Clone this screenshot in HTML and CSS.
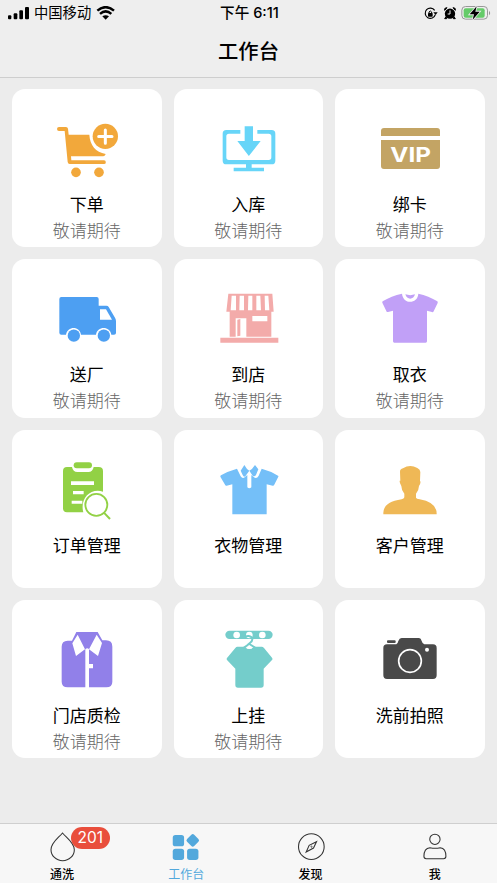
FILE: index.html
```html
<!DOCTYPE html>
<html lang="zh-CN">
<head>
<meta charset="utf-8">
<meta name="viewport" content="width=device-width, initial-scale=1">
<title>工作台</title>
<link rel="stylesheet" href="styles.css">
</head>
<body>
<div class="app">
  <header class="header">
    <div class="status">
      <div class="status-left">
        <svg class="signal" viewBox="24 15 63 42"><rect x="24" y="43" width="10" height="12" rx="3"/><rect x="41" y="37" width="11" height="18" rx="3"/><rect x="58" y="28" width="11" height="27" rx="3"/><rect x="75" y="18" width="12" height="37" rx="3"/></svg>
        <span>中国移动</span>
        <svg class="wifi" viewBox="291 15 57 42"><g fill="none" stroke="#000" stroke-width="7.5"><path d="M295 29Q320 8 345 29"/><path d="M303 38.500Q320 24 337 38.500"/></g><path d="M310 46Q320 39 330 46L320 56Z"/></svg>
      </div>
      <div class="status-time">下午 6:11</div>
      <div class="status-right">
        <svg class="indicators" viewBox="530 13 201 48">
          <path d="M562 29A15.500 15.500 0 1 0 564 42" fill="none" stroke="#000" stroke-width="3.500"/><path d="M558 35L571 35L565 43Z"/>
          <rect x="542" y="37" width="14" height="11" rx="2"/><path d="M545 38V34Q549 28 553 34V38" fill="none" stroke="#000" stroke-width="3"/>
          <circle cx="608" cy="39" r="15.500"/><path d="M592 29Q590 21 599 21ZM617 21Q626 21 624 29ZM596 48L592 54H598ZM620 48L624 54H618Z" stroke="#000" stroke-width="3"/><path d="M608 29V40H601" fill="none" stroke="#ededed" stroke-width="3"/>
          <rect x="643.500" y="17.500" width="77" height="38" rx="11" fill="none" stroke="#989898" stroke-width="3"/>
          <rect x="649" y="23" width="63" height="28" rx="6" fill="#65cb69"/><path d="M725 30Q732 37 725 44Z" fill="#989898"/>
          <path d="M688 17L667 41H680L676 57L697 33H684Z" stroke="#ededed" stroke-width="5" paint-order="stroke"/>
        </svg>
      </div>
    </div>
    <h1 class="title">工作台</h1>
  </header>

  <main class="grid">
    <section class="card">
      <svg viewBox="36 87 448.500 210" fill="#f2a83b"><path d="M177 126H198Q203 126 204 131L206 149H268C270 181 287 201 317 207Q316 213 310 214H213L214 226H312A5.500 5.500 0 0 1 312 237H209Q204 237 203 231L194 138H177A6 6 0 0 1 177 126Z"/><circle cx="228" cy="262" r="14.500"/><circle cx="297" cy="262" r="14.500"/><circle cx="316" cy="154" r="38"/><path d="M316 135V175M296 154.500H336" fill="none" stroke="#fff" stroke-width="9" stroke-linecap="round"/></svg>
      <h2>下单</h2><p>敬请期待</p>
    </section>
    <section class="card">
      <svg viewBox="26 87 448.500 210" fill="#67d5f8"><path d="M225 135H183Q172 135 172 146V227Q172 238 183 238H242V248H205V259H296V248H259V238H319Q330 238 330 227V146Q330 135 319 135H276V146H310Q318 146 318 154V217Q318 225 310 225H191Q183 225 183 217V154Q183 146 191 146H225Z"/><path d="M238 124H263V168H286L250.500 213L216 168H238Z"/></svg>
      <h2>入库</h2><p>敬请期待</p>
    </section>
    <section class="card">
      <svg viewBox="24 87 448.500 210" fill="#c3a464"><path d="M162 153V138Q162 129 171 129H330Q339 129 339 138V153ZM162 165H339V243Q339 252 330 252H171Q162 252 162 243Z"/><text class="vip" x="251" y="230" text-anchor="middle" textLength="122" lengthAdjust="spacingAndGlyphs">VIP</text></svg>
      <h2>绑卡</h2><p>敬请期待</p>
    </section>
    <section class="card">
      <svg viewBox="36 88 448.500 210" fill="#4d9ff2"><path d="M184 127H290Q296 127 296 133V153H319Q324 153 326 157L345 189Q348 194 348 200V235Q348 240 342 240H334C331 213 291 213 288 240H243C240 213 202 213 198 240H184Q178 240 178 234V133Q178 127 184 127Z"/><path d="M300 164H318L336 195H300Z" fill="#fff"/><circle cx="221.500" cy="243" r="18.500"/><circle cx="311.500" cy="243" r="18.500"/></svg>
      <h2>送厂</h2><p>敬请期待</p>
    </section>
    <section class="card">
      <svg viewBox="26 88 448.500 210" fill="#f3abaa"><path d="M189 117H321L325 171H318V246H243V191H211V246H193V171H183ZM216 195L225 193V243L216 245ZM165 249H339V264H165Z"/><path d="M199 123H212V167H196ZM223 123H236V167H222ZM249 123H261V167H248ZM273 123H285L287 167H273ZM298 123H309L312 167H299ZM261 184H306V200H261Z" fill="#fff"/></svg>
      <h2>到店</h2><p>敬请期待</p>
    </section>
    <section class="card">
      <svg viewBox="510 88 448.500 210" fill="#c1a0f7"><path d="M711 117Q679 124 653 140Q651 142 652 144L665 171Q666 173 669 172L684 168V260Q684 264 688 264H782Q786 264 786 260V168L801 172Q804 174 806 170L818 145Q819 142 817 140Q791 124 760 117C758 148 715 151 711 117Z"/><path d="M721 119Q736 124 750 119C747 135 726 138 721 119Z"/></svg>
      <h2>取衣</h2><p>敬请期待</p>
    </section>
    <section class="card">
      <svg viewBox="36 89 448.500 210" fill="#92d145"><path d="M201 125H216Q219 140 232 140H265Q278 140 281 125H296Q309 125 309 137V199C271 187 239 220 250 261H201Q189 261 189 249V137Q189 125 201 125Z"/><rect x="221" y="111" width="55" height="18" rx="9"/><path d="M213 168H282V179H213ZM219 197H251V207H219ZM215 226H247V235H215Z" fill="#fff"/><circle cx="289" cy="238.500" r="33" fill="#fff" stroke="#92d145" stroke-width="5.500"/><path d="M311 261L330 281" stroke="#92d145" stroke-width="6"/></svg>
      <h2>订单管理</h2>
    </section>
    <section class="card">
      <svg viewBox="521 89 448.500 210" fill="#74bff8"><path d="M710 130L721 153Q727 162 734 155L741 149V186Q747 192 753 186V149L760 155Q769 162 775 151L784 130Q811 137 833 151Q835 152 834 154L821 180Q819 182 817 181L799 177V267H696V177L679 181Q676 182 675 180L660 154Q660 151 662 150Q684 137 710 130ZM732 119Q739 132 747 136L735 153Q730 156 727 149L721 136ZM764 119L774 132L767 149Q762 156 757 151L747 136Q756 132 764 119Z"/></svg>
      <h2>衣物管理</h2>
    </section>
    <section class="card">
      <svg viewBox="24 89 448.500 210" fill="#efb856"><path d="M220 166L219 139Q219 131 228 129Q249 115 271 128Q280 132 280 140L279 166Q283 172 276 182Q276 193 267 205V217Q268 221 278 222Q329 231 329 265V267H169V262Q170 230 224 222Q231 221 232 216V205Q223 194 223 182Q217 173 218 166Z"/></svg>
      <h2>客户管理</h2>
    </section>
    <section class="card">
      <svg viewBox="36 90 448.500 210" fill="#9180e9"><path d="M229 111H293L307 136H318Q337 136 337 155V260Q337 277 319 277H267V220H279V207H267V163Q262 157 256 163V277H203Q185 277 185 260V155Q185 137 203 137H216Z"/><path d="M233 119L255 163L228 183L217 145ZM290 119L306 144L294 183L267 163Z" fill="#fff"/></svg>
      <h2>门店质检</h2><p>敬请期待</p>
    </section>
    <section class="card">
      <svg viewBox="521 90 448.500 210" fill="#74cdcb"><rect x="675" y="107" width="142" height="25" rx="12.500"/><g fill="#fff"><circle cx="709" cy="120" r="10"/><circle cx="747" cy="120" r="10"/><circle cx="786" cy="120" r="10"/></g><path d="M732 128C737 121 754 121 756 132C757 143 746 143 742 150L729 159M747 147L766 159" fill="none" stroke="#74cdcb" stroke-width="6"/><path d="M711 155H734Q747 168 761 155H784Q788 155 791 159L815 188Q818 192 815 195L790 221V270Q790 278 782 278H713Q705 278 705 270V221L680 195Q678 192 680 189L705 159Q708 155 711 155Z"/><path d="M738 160Q747 153 756 160Q747 164 738 160Z" fill="#fff"/></svg>
      <h2>上挂</h2><p>敬请期待</p>
    </section>
    <section class="card">
      <svg viewBox="24 90 448.500 210" fill="#494949"><path d="M180 148H208Q212 147 214 138Q217 129 224 129H276Q282 129 284 138Q287 148 292 148H318Q329 148 329 159V241Q329 252 318 252H180Q169 252 169 241V159Q169 148 180 148Z"/><rect x="180" y="136" width="26" height="8" rx="3"/><circle cx="249" cy="198" r="34" fill="none" stroke="#fff" stroke-width="5"/><circle cx="300" cy="164" r="6" fill="#fff"/></svg>
      <h2>洗前拍照</h2>
    </section>
  </main>

  <nav class="tabs">
    <a class="tab">
      <svg viewBox="0 33 372.750 120" fill="none" stroke="#333" stroke-width="3.200"><path d="M187.500 54C175 69 153 83 153 104A35 33 0 0 0 223 104C223 83 200 69 187.500 54Z"/></svg>
      <span>通洗</span><b class="badge">201</b>
    </a>
    <a class="tab active">
      <svg viewBox="372.750 33 372.750 120" fill="#52a8dc"><rect x="519" y="60" width="34" height="34" rx="8"/><rect x="519" y="101" width="34" height="34" rx="8"/><rect x="562" y="101" width="34" height="34" rx="8"/><rect x="564" y="61" width="30" height="30" rx="6" transform="rotate(45 579 76)"/></svg>
      <span>工作台</span>
    </a>
    <a class="tab">
      <svg viewBox="745.500 33 372.750 120" fill="none" stroke="#333" stroke-width="3.200"><circle cx="932.500" cy="95" r="38.500"/><path d="M948 80L939 99L917 111L926 91Z"/><circle cx="933" cy="95" r="2" stroke-width="2"/></svg>
      <span>发现</span>
    </a>
    <a class="tab">
      <svg viewBox="1118.250 33 372.750 120" fill="none" stroke="#333" stroke-width="3.200"><circle cx="1304" cy="73" r="15.500"/><path d="M1289 98Q1305 102 1320 98C1332 99 1337 110 1337 124Q1337 131 1330 131H1278Q1271 131 1271 124C1271 108 1278 99 1289 98Z"/></svg>
      <span>我</span>
    </a>
  </nav>
</div>
</body>
</html>
```
FILE: styles.css
```css
* {
  box-sizing: border-box;
  margin: 0;
  padding: 0;
}

body {
  font-family: Inter, "Noto Sans CJK SC", sans-serif;
  color: #000;
}

svg {
  display: block;
}

.app {
  display: flex;
  flex-direction: column;
  height: 883px;
  background: #ececec;
  overflow: hidden;
}

.header {
  height: 78px;
  background: #eee;
  border-bottom: 1px solid #cecece;
}

.status {
  display: grid;
  grid-template-columns: 1fr auto 1fr;
  align-items: center;
  height: 26px;
  padding: 0 6px 0 8px;
  font-size: 14.3px;
  line-height: 26px;
}

.status-left {
  display: flex;
  align-items: center;
  gap: 5px;
}

.signal {
  width: 21px;
  height: 14px;
}

.wifi {
  width: 19px;
  height: 14px;
}

.status-time {
  font-size: 14.6px;
  font-weight: 500;
}

.status-right {
  display: flex;
  justify-content: flex-end;
}

.indicators {
  width: 67px;
  height: 16px;
}

.title {
  font-size: 20.3px;
  font-weight: 500;
  line-height: 52px;
  text-align: center;
}

.grid {
  flex: 1;
  display: grid;
  grid-template-columns: repeat(3, 149.5px);
  grid-auto-rows: 158.3px;
  align-content: start;
  gap: 12px;
  padding: 11px 12px;
}

.card {
  padding-top: 25px;
  background: #fff;
  border-radius: 13px;
  text-align: center;
}

.card svg {
  width: 149.5px;
  height: 70px;
}

.card h2 {
  margin-top: 8px;
  font-size: 17px;
  font-weight: 400;
  line-height: 26px;
}

.card p {
  color: #666;
  font-size: 17px;
  font-weight: 300;
  line-height: 27px;
}

.vip {
  fill: #fff;
  font-family: Inter, sans-serif;
  font-size: 62px;
  font-weight: 700;
}

.tabs {
  display: grid;
  grid-template-columns: repeat(4, 1fr);
  height: 60px;
  background: #f7f7f7;
  border-top: 1px solid #cfcfcf;
}

.tab {
  position: relative;
  padding-top: 2px;
  font-size: 12px;
  font-weight: 500;
  line-height: 18px;
  text-align: center;
}

.tab svg {
  width: 100%;
  height: 40px;
}

.tab span {
  display: block;
}

.active {
  color: #52a8dc;
}

.active span {
  font-weight: 400;
}

.badge {
  position: absolute;
  top: 3px;
  left: 71px;
  width: 38.5px;
  height: 22px;
  border-radius: 11px;
  background: #e94e3c;
  color: #fff;
  font-size: 15.5px;
  font-weight: 400;
  line-height: 22px;
}
```
